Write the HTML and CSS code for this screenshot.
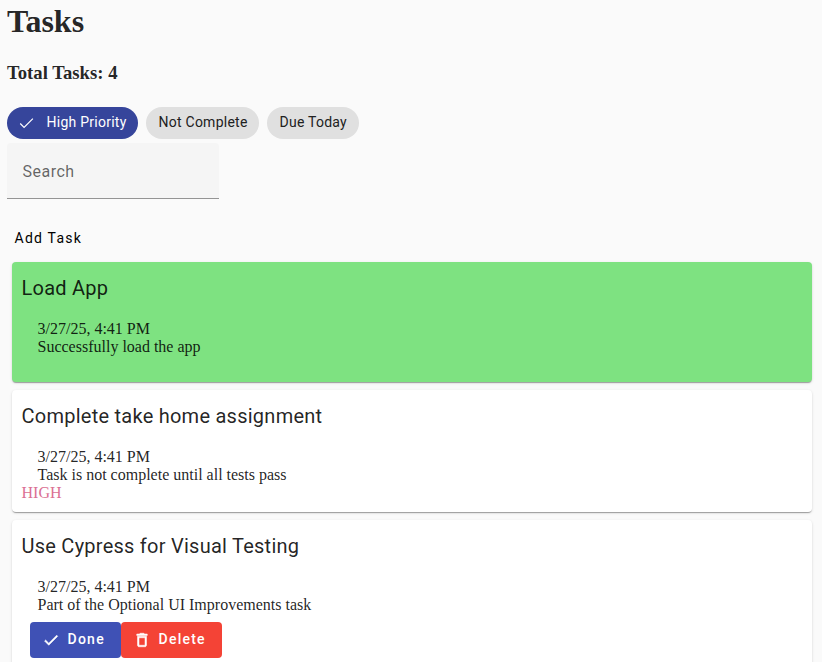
FILE: index.html
```html
<!DOCTYPE html>
<html lang="en">
<head>
<meta charset="utf-8">
<title>Tasks</title>
<link rel="stylesheet" href="styles.css">
</head>
<body>
<h1>Tasks</h1>
<h3>Total Tasks: 4</h3>
<div class="chips">
  <button class="chip selected"><svg class="chip-check" viewBox="-2 -3 30 30"><path fill="none" stroke="currentColor" stroke-width="2" d="M1.73,12.91 8.1,19.28 22.79,4.59"/></svg>High Priority</button>
  <button class="chip">Not Complete</button>
  <button class="chip due">Due Today</button>
</div>
<div class="search"><label>Search</label></div>
<button class="add">Add Task</button>
<main>
  <article class="card complete">
    <h2>Load App</h2>
    <div class="content"><p>3/27/25, 4:41 PM</p><p>Successfully load the app</p></div>
  </article>
  <article class="card">
    <h2>Complete take home assignment</h2>
    <div class="content"><p>3/27/25, 4:41 PM</p><p>Task is not complete until all tests pass</p></div>
    <div class="priority">HIGH</div>
  </article>
  <article class="card">
    <h2>Use Cypress for Visual Testing</h2>
    <div class="content"><p>3/27/25, 4:41 PM</p><p>Part of the Optional UI Improvements task</p></div>
    <div class="actions">
      <button class="action done"><svg viewBox="0 0 24 24"><path d="M9 16.17 4.83 12l-1.42 1.41L9 19 21 7l-1.41-1.41z"/></svg>Done</button>
      <button class="action delete"><svg viewBox="0 0 24 24"><path d="M6 19c0 1.1.9 2 2 2h8c1.1 0 2-.9 2-2V7H6v12zM8 9h8v10H8V9zm7.500-5-1-1h-5l-1 1H5v2h14V4z"/></svg>Delete</button>
    </div>
  </article>
</main>
</body>
</html>
```
FILE: styles.css
```css
* { box-sizing: border-box; }
body { margin: 0; padding: 3px 10px 0 7px; height: 662px; overflow: hidden; background: #fafafa; color: rgba(0,0,0,.87); font: 16px/18px "Liberation Serif", serif; }
h1, h2, h3, p { margin: 0; }
h1 { font-size: 32px; line-height: 37px; }
h3 { margin-top: 22px; font-size: 18.72px; line-height: 21px; }
button { border: 0; margin: 0; font-family: Roboto, sans-serif; color: #212121; }
.chips { display: flex; gap: 8px; margin-top: 24px; }
.chip { display: flex; align-items: center; width: 113px; height: 32px; padding: 0 0 2px 12.5px; border-radius: 16px; background: #e0e0e0; font-size: 14px; letter-spacing: .25px; white-space: nowrap; }
.chip.selected { width: 131px; background: #36459b; color: #fff; }
.chip.due { width: 92px; }
.chip-check { flex: none; width: 18px; height: 18px; margin: 2px 10.5px 0 -1.5px; }
.search { width: 212px; height: 56px; margin-top: 4px; padding: 17px 15.5px 0; border-bottom: 1px solid #949494; border-radius: 4px 4px 0 0; background: #f5f5f5; color: rgba(0,0,0,.6); font: 16px/24px Roboto, sans-serif; letter-spacing: .5px; }
.add { display: block; height: 36px; margin-top: 21px; padding: 0 7.5px; background: transparent; color: #000; font-size: 14px; letter-spacing: 1.25px; }
main { padding: 6px 0 0 5px; }
.card { height: 120px; margin-bottom: 8px; padding: 10px 9.5px; border-radius: 4px; background: #fff; color: rgba(0,0,0,.87); box-shadow: 0 2px 1px -1px rgba(0,0,0,.2), 0 1px 1px rgba(0,0,0,.14), 0 1px 3px rgba(0,0,0,.12); }
.card + .card { height: 122px; }
.card + .card + .card { height: 150px; }
.complete { background: #7ee281; }
.card h2 { font: 400 20px/32px Roboto, sans-serif; letter-spacing: .25px; }
.content { padding: 16px 16px 0; }
.priority { color: palevioletred; }
.actions { display: flex; padding: 8px 8.5px; }
.action { display: flex; align-items: center; height: 36px; padding: 0 16px 2px 12px; border-radius: 4px; color: #fff; font-size: 14px; font-weight: 500; letter-spacing: 1.25px; }
.action svg { width: 18px; height: 18px; margin: 2px 7.5px 0 0; fill: currentColor; stroke: currentColor; stroke-width: .7px; }
.done { width: 91px; background: #3f51b5; }
.delete { width: 101px; background: #f44336; }
```
